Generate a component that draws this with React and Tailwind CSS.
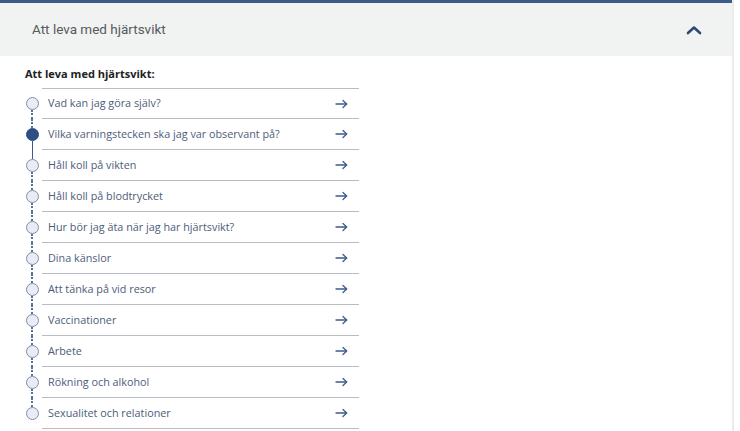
import React from "react";

const items = [
  "Vad kan jag göra själv?",
  "Vilka varningstecken ska jag var observant på?",
  "Håll koll på vikten",
  "Håll koll på blodtrycket",
  "Hur bör jag äta när jag har hjärtsvikt?",
  "Dina känslor",
  "Att tänka på vid resor",
  "Vaccinationer",
  "Arbete",
  "Rökning och alkohol",
  "Sexualitet och relationer",
];

const ACTIVE = 1;

function Arrow() {
  return (
    <svg width="13" height="10" viewBox="0 0 13 10" fill="none" stroke="#3d5a8a" strokeWidth="1.3" strokeLinecap="round" strokeLinejoin="round">
      <path d="M1 5H11.5" />
      <path d="M8 1.5L11.7 5L8 8.5" />
    </svg>
  );
}

function Row({ label, i, last }) {
  const topSolid = i === ACTIVE + 1;
  const bottomSolid = i === ACTIVE;
  return (
    <li className="flex h-[31px]">
      <div className="w-[17px] flex flex-col items-center pr-[3px]">
        <div className={"flex-1 w-0 " + (i === 0 ? "" : topSolid ? "border-l-[1.5px] border-solid border-[#3d5a8a]" : "border-l-2 border-dotted border-[#5a7299]")} />
        <div
          className={
            "w-[13px] h-[13px] rounded-full shrink-0 " +
            (i === ACTIVE ? "bg-[#2d4f86] border border-[#2d4f86]" : "bg-[#e8ecf4] border border-[#7f8ea8]")
          }
        />
        <div className={"flex-1 w-0 " + (last ? "" : bottomSolid ? "border-l-[1.5px] border-solid border-[#3d5a8a]" : "border-l-2 border-dotted border-[#5a7299]")} />
      </div>
      <div className={"w-[317px] flex items-center justify-between pl-[6px] pr-[11px] border-b border-[#b9bcc2] " + (i === 0 ? "border-t" : "")}>
        <span className="text-[10.8px] text-[#4d5c78]">{label}</span>
        <Arrow />
      </div>
    </li>
  );
}

export default function App() {
  return (
    <div className="w-[740px] h-[431px] bg-white flex overflow-hidden" style={{ fontFamily: '"Open Sans", "Noto Sans", sans-serif' }}>
      <div className="w-[732px] shrink-0 flex flex-col">
        <div className="h-[56px] border-t-[3px] border-[#3d5a8a] bg-[#f1f2f2] flex items-center justify-between pl-[32px] pr-[30px]">
          <span className="text-[13.5px] text-[#555a5e]" style={{ fontFamily: 'Roboto, "Open Sans", sans-serif' }}>Att leva med hjärtsvikt</span>
          <svg width="16" height="10" viewBox="0 0 16 10" fill="none" stroke="#2f4a75" strokeWidth="2.6" strokeLinecap="round" strokeLinejoin="round">
            <path d="M2 8L8 2.5L14 8" />
          </svg>
        </div>
        <div className="pl-[25px] pt-[11px]">
          <div className="text-[11px] font-bold text-[#222] leading-[14px] mb-[7px]">Att leva med hjärtsvikt:</div>
          <ul className="flex flex-col">
            {items.map((t, i) => (
              <Row key={t} label={t} i={i} last={i === items.length - 1} />
            ))}
          </ul>
        </div>
      </div>
      <div className="w-[2px] bg-[#ececec]" />
      <div className="flex-1 bg-white" />
    </div>
  );
}
